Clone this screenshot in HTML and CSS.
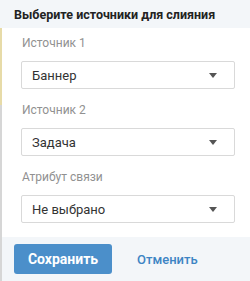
FILE: index.html
```html
<!DOCTYPE html>
<html lang="ru">
<head>
  <meta charset="UTF-8" />
  <title>Слияние</title>
  <link rel="stylesheet" href="styles.css">
</head>
<body>

  <div class="page-edge">
    <div class="edge-top"></div>
    <div class="edge-bottom"></div>
  </div>

  <div class="dialog">
    <div class="dialog-header">Выберите источники для слияния</div>

    <div class="dialog-body">
      <div class="field">
        <label>Источник 1</label>
        <div class="select">
          <span>Баннер</span>
          <span class="arrow"></span>
        </div>
      </div>

      <div class="field">
        <label>Источник 2</label>
        <div class="select">
          <span>Задача</span>
          <span class="arrow"></span>
        </div>
      </div>

      <div class="field">
        <label>Атрибут связи</label>
        <div class="select">
          <span>Не выбрано</span>
          <span class="arrow"></span>
        </div>
      </div>
    </div>

    <div class="dialog-footer">
      <button class="btn-save">Сохранить</button>
      <a class="btn-cancel" href="#">Отменить</a>
    </div>
  </div>

</body>
</html>
```

FILE: styles.css
```css
* {
  box-sizing: border-box;
}

html, body {
  margin: 0;
  padding: 0;
  height: 100%;
}

body {
  font-family: Roboto, "Liberation Sans", sans-serif;
  display: flex;
  background: #fff;
  overflow: hidden;
}

/* strip of the page behind the dialog */
.page-edge {
  width: 2px;
  display: flex;
  flex-direction: column;
  padding-top: 28px;
  background: #f3f6f9;
}

.edge-top {
  height: 77px;
  background: #e7dba8;
}

.edge-bottom {
  flex: 1;
  background: #d6d6d6;
}

.dialog {
  flex: 1;
  display: flex;
  flex-direction: column;
}

.dialog-header {
  height: 28px;
  background: #f3f6f9;
  padding: 0 12px;
  display: flex;
  align-items: center;
  font-size: 12.5px;
  font-weight: 700;
  color: #222;
  white-space: nowrap;
}

.dialog-body {
  flex: 1;
  padding: 7px 15px 0 19px;
}

.field label {
  display: block;
  font-size: 12px;
  color: #919191;
  line-height: 14px;
  padding: 1px 1px 0;
  margin-bottom: 11px;
}

.field + .field {
  margin-top: 13px;
}

.select {
  height: 28px;
  border: 1px solid #d9d9d9;
  border-radius: 2px;
  display: flex;
  align-items: center;
  justify-content: space-between;
  padding: 0 17px 0 10px;
  font-size: 13px;
  color: #333;
}

.arrow {
  width: 0;
  height: 0;
  border-left: 4px solid transparent;
  border-right: 4px solid transparent;
  border-top: 5px solid #555;
}

.dialog-footer {
  height: 44px;
  background: #f3f6f9;
  display: flex;
  align-items: center;
  padding: 0 12px;
  gap: 25px;
}

.btn-save {
  width: 98px;
  height: 30px;
  border: none;
  border-radius: 3px;
  background: #4b8fca;
  color: #fff;
  font-family: inherit;
  font-size: 14px;
  font-weight: 700;
  cursor: pointer;
}

.btn-cancel {
  color: #3d84c4;
  font-size: 13px;
  font-weight: 500;
  text-decoration: none;
}
```
